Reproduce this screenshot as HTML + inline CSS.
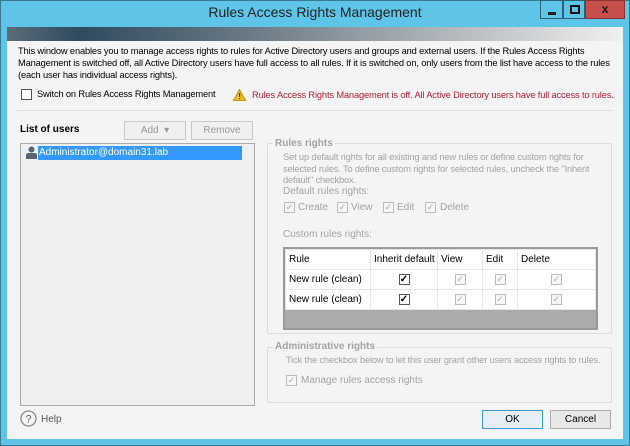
<!DOCTYPE html>
<html><head><style>
*{box-sizing:border-box;margin:0;padding:0}
body{width:630px;height:446px;background:#5ec5e9;font-family:"Liberation Sans",sans-serif;font-size:10px;color:#000;position:relative;overflow:hidden;white-space:nowrap}
.a{position:absolute}
.s{font-size:9.3px;letter-spacing:-0.15px}
.win{left:0;top:0;width:630px;height:446px;border:1px solid #3a7a90}
.title{left:0;top:4px;width:630px;text-align:center;font-size:14px;color:#222}
.body{left:7px;top:27px;width:616px;height:412px;background:#f4f4f4}
.banner{left:7px;top:27px;width:616px;height:14px;background:linear-gradient(90deg,#5a6c78 0%,#2f4a5e 12%,#6c7b86 40%,#b9bec2 75%,#f0f0f0 100%)}
.tb{top:0;height:19px;border:1px solid #2b5f72;background:#5ec5e9}
.cb{width:11px;height:11px;border:1px solid #555;background:#fff}
.dcb{width:11px;height:11px;border:1px solid #bbb;background:#f6f6f6;color:#aaa;font-size:9px;line-height:9px;text-align:center}
.gray{color:#a3a3a3}
.btn{border:1px solid #c8c8c8;background:#f0f0f0;color:#999;text-align:center;line-height:17px;height:19px}
.grp{border:1px solid #dcdcdc;border-radius:2px}
table{border-collapse:collapse;table-layout:fixed}
td{border:1px solid #e6e6e6;height:20px;padding:0 3px;font-size:10px;overflow:hidden}
</style></head><body>
<div class="a win"></div>
<div class="a title">Rules Access Rights Management</div>
<div class="a tb" style="left:540px;width:23px"><div class="a" style="left:7px;top:11px;width:8px;height:3px;background:#222"></div></div>
<div class="a tb" style="left:563px;width:22px"><div class="a" style="left:6px;top:4px;width:10px;height:9px;border:2px solid #111"></div></div>
<div class="a tb" style="left:585px;width:40px;background:#c7504a;border-color:#8a3330;color:#111;font-weight:bold;text-align:center;font-size:12px;line-height:17px">x</div>
<div class="a body"></div>
<div class="a banner"></div>
<div class="a s" style="left:18px;top:45px;line-height:12px">This window enables you to manage access rights to rules for Active Directory users and groups and external users. If the Rules Access Rights<br>Management is switched off, all Active Directory users have full access to all rules. If it is switched on, only users from the list have access to the rules<br>(each user has individual access rights).</div>
<div class="a cb" style="left:21px;top:89px"></div>
<div class="a s" style="left:37px;top:89px">Switch on Rules Access Rights Management</div>
<svg class="a" style="left:233px;top:89px" width="13" height="12"><path d="M6.5 0.5L12.5 11.5H0.5Z" fill="#f0c020" stroke="#c09010"/><rect x="6" y="4" width="1.2" height="4" fill="#333"/><rect x="6" y="9" width="1.2" height="1.2" fill="#333"/></svg>
<div class="a s" style="left:252px;top:90px;color:#b0203a">Rules Access Rights Management is off. All Active Directory users have full access to rules.</div>
<div class="a" style="left:17px;top:110px;width:595px;height:1px;background:#dedede"></div>
<div class="a" style="left:20px;top:124px;font-weight:bold">List of users</div>
<div class="a btn" style="left:124px;top:121px;width:62px">Add &nbsp;&#9662;</div>
<div class="a btn" style="left:191px;top:121px;width:62px">Remove</div>
<div class="a" style="left:20px;top:143px;width:235px;height:263px;border:1px solid #aaa;background:#efefef"></div>
<svg class="a" style="left:26px;top:146px" width="11" height="13"><circle cx="5.5" cy="3.5" r="3" fill="#5a6470"/><path d="M0 13V9Q0 7 3 7H8Q11 7 11 9V13Z" fill="#5a6470"/></svg>
<div class="a" style="left:38px;top:146px;width:204px;height:14px;background:#3399ff;color:#fff;line-height:14px;padding-left:1px">Administrator@domain31.lab</div>
<div class="a grp" style="left:267px;top:143px;width:345px;height:191px"></div>
<div class="a gray" style="left:273px;top:138px;background:#f4f4f4;padding:0 2px;font-weight:bold">Rules rights</div>
<div class="a gray s" style="left:283px;top:152px;line-height:11.5px">Set up default rights for all existing and new rules or define custom rights for<br>selected rules. To define custom rights for selected rules, uncheck the "Inherit<br>default" checkbox.</div>
<div class="a gray" style="left:283px;top:186px">Default rules rights:</div>
<div class="a dcb" style="left:284px;top:202px">✓</div><div class="a gray" style="left:298px;top:202px">Create</div>
<div class="a dcb" style="left:337px;top:202px">✓</div><div class="a gray" style="left:351px;top:202px">View</div>
<div class="a dcb" style="left:383px;top:202px">✓</div><div class="a gray" style="left:397px;top:202px">Edit</div>
<div class="a dcb" style="left:425px;top:202px">✓</div><div class="a gray" style="left:440px;top:202px">Delete</div>
<div class="a gray" style="left:283px;top:229px">Custom rules rights:</div>
<div class="a" style="left:283px;top:247px;width:315px;height:83px;border:2px solid #9a9a9a;background:#ababab">
<table style="width:311px;background:#fff">
<tr><td style="width:85px">Rule</td><td style="width:67px">Inherit default</td><td style="width:45px">View</td><td style="width:35px">Edit</td><td>Delete</td></tr>
<tr><td>New rule (clean)</td><td style="text-align:center"><span class="cb" style="display:inline-block;font-size:10px;line-height:9px;font-weight:bold">✓</span></td><td style="text-align:center"><span class="dcb" style="display:inline-block">✓</span></td><td style="text-align:center"><span class="dcb" style="display:inline-block">✓</span></td><td style="text-align:center"><span class="dcb" style="display:inline-block">✓</span></td></tr>
<tr><td>New rule (clean)</td><td style="text-align:center"><span class="cb" style="display:inline-block;font-size:10px;line-height:9px;font-weight:bold">✓</span></td><td style="text-align:center"><span class="dcb" style="display:inline-block">✓</span></td><td style="text-align:center"><span class="dcb" style="display:inline-block">✓</span></td><td style="text-align:center"><span class="dcb" style="display:inline-block">✓</span></td></tr>
</table></div>
<div class="a grp" style="left:267px;top:347px;width:345px;height:56px"></div>
<div class="a gray" style="left:273px;top:341px;background:#f4f4f4;padding:0 2px;font-weight:bold">Administrative rights</div>
<div class="a gray s" style="left:286px;top:355px">Tick the checkbox below to let this user grant other users access rights to rules.</div>
<div class="a dcb" style="left:286px;top:375px">✓</div><div class="a gray" style="left:301px;top:375px">Manage rules access rights</div>
<svg class="a" style="left:20px;top:410px" width="17" height="17"><circle cx="8.5" cy="8.5" r="7.5" fill="none" stroke="#888" stroke-width="1.3"/><text x="8.5" y="12.5" font-size="11" font-family="Liberation Sans" text-anchor="middle" fill="#666">?</text></svg>
<div class="a" style="left:41px;top:414px;color:#555">Help</div>
<div class="a" style="left:482px;top:410px;width:61px;height:19px;border:1px solid #3c9ad8;background:#e6eef6;text-align:center;line-height:17px">OK</div>
<div class="a" style="left:550px;top:410px;width:61px;height:19px;border:1px solid #adadad;background:#e8e8e8;text-align:center;line-height:17px">Cancel</div>
</body></html>
